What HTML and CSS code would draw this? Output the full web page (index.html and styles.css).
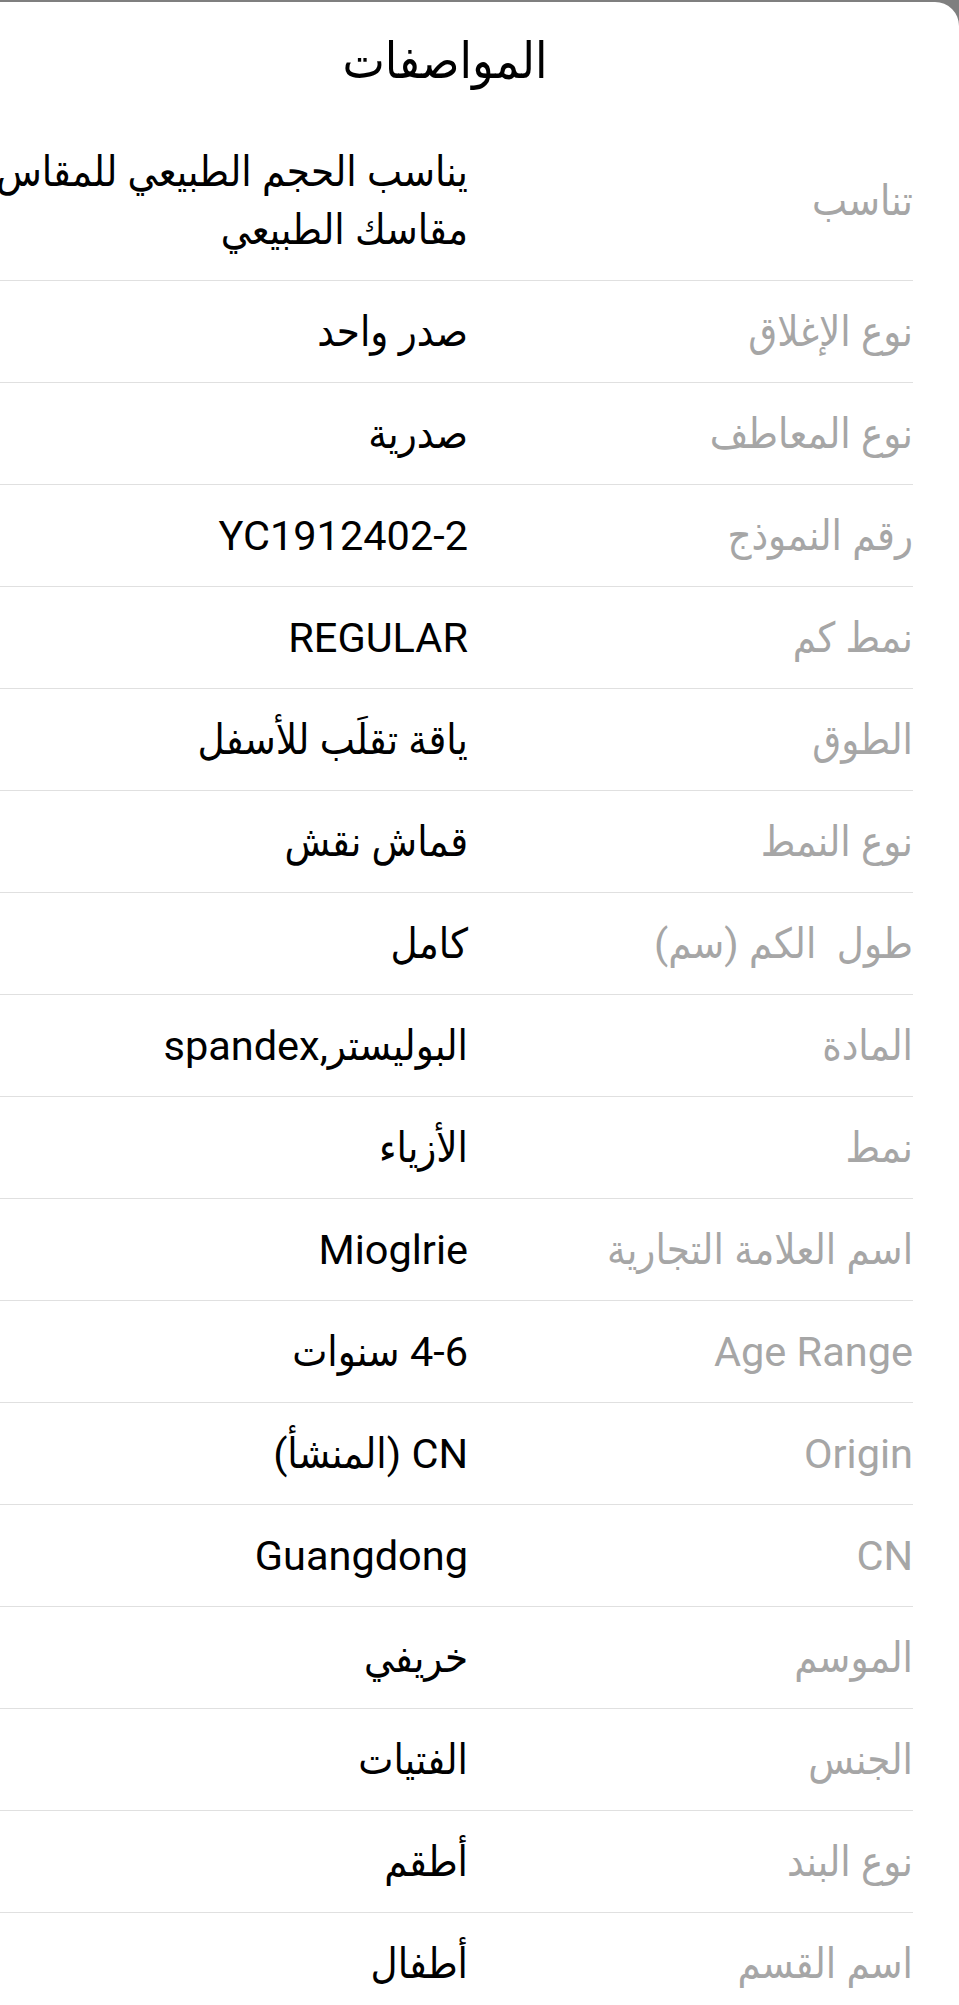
FILE: index.html
```html
<!DOCTYPE html>
<html lang="ar" dir="rtl">
<head>
    <meta charset="UTF-8">
    <meta name="viewport" content="width=device-width, initial-scale=1.0">
    <title>المواصفات</title>
    <link rel="stylesheet" href="styles.css">
</head>
<body>

<div class="sheet">
    <h1 class="sheet-title">المواصفات</h1>

    <div class="specs">
        <div class="spec-row">
            <div class="spec-label">تناسب</div>
            <div class="spec-value">يناسب الحجم الطبيعي للمقاس مقاسك الطبيعي</div>
        </div>
        <div class="spec-row">
            <div class="spec-label">نوع الإغلاق</div>
            <div class="spec-value">صدر واحد</div>
        </div>
        <div class="spec-row">
            <div class="spec-label">نوع المعاطف</div>
            <div class="spec-value">صدرية</div>
        </div>
        <div class="spec-row">
            <div class="spec-label">رقم النموذج</div>
            <div class="spec-value">YC1912402-2</div>
        </div>
        <div class="spec-row">
            <div class="spec-label">نمط كم</div>
            <div class="spec-value">REGULAR</div>
        </div>
        <div class="spec-row">
            <div class="spec-label">الطوق</div>
            <div class="spec-value">ياقة تقلَب للأسفل</div>
        </div>
        <div class="spec-row">
            <div class="spec-label">نوع النمط</div>
            <div class="spec-value">قماش نقش</div>
        </div>
        <div class="spec-row">
            <div class="spec-label">طول&nbsp; الكم (سم)</div>
            <div class="spec-value">كامل</div>
        </div>
        <div class="spec-row">
            <div class="spec-label">المادة</div>
            <div class="spec-value">البوليستر,spandex</div>
        </div>
        <div class="spec-row">
            <div class="spec-label">نمط</div>
            <div class="spec-value">الأزياء</div>
        </div>
        <div class="spec-row">
            <div class="spec-label">اسم العلامة التجارية</div>
            <div class="spec-value">Mioglrie</div>
        </div>
        <div class="spec-row">
            <div class="spec-label">Age Range</div>
            <div class="spec-value">4-6 سنوات</div>
        </div>
        <div class="spec-row">
            <div class="spec-label">Origin</div>
            <div class="spec-value">CN (المنشأ)</div>
        </div>
        <div class="spec-row">
            <div class="spec-label">CN</div>
            <div class="spec-value">Guangdong</div>
        </div>
        <div class="spec-row">
            <div class="spec-label">الموسم</div>
            <div class="spec-value">خريفي</div>
        </div>
        <div class="spec-row">
            <div class="spec-label">الجنس</div>
            <div class="spec-value">الفتيات</div>
        </div>
        <div class="spec-row">
            <div class="spec-label">نوع البند</div>
            <div class="spec-value">أطقم</div>
        </div>
        <div class="spec-row">
            <div class="spec-label">اسم القسم</div>
            <div class="spec-value">أطفال</div>
        </div>
    </div>
</div>

</body>
</html>
```

FILE: styles.css
```css
body {
    margin: 0;
    padding: 0;
    background-color: #7f7f7f;
    font-family: Roboto, "DejaVu Sans Condensed", "DejaVu Sans", sans-serif;
    color: #000;
    overflow: hidden;
}
.sheet {
    direction: rtl;
    margin-top: 2px;
    margin-left: -69px;
    width: 1028px;
    min-height: 2100px;
    background: #fff;
    border-top-right-radius: 24px;
}
.sheet-title {
    margin: 0;
    height: 119px;
    line-height: 118px;
    text-align: center;
    font-size: 50px;
    font-weight: normal;
}
.specs {
    padding: 0 46px;
}
.spec-row {
    display: grid;
    grid-template-columns: 445px 1fr;
    padding: 21.5px 0;
    border-bottom: 1px solid #e0e0e0;
    font-size: 41.5px;
    line-height: 58px;
}
.spec-label {
    color: #a6a6a6;
    align-self: center;
}
.spec-value {
    color: #000;
}
```
